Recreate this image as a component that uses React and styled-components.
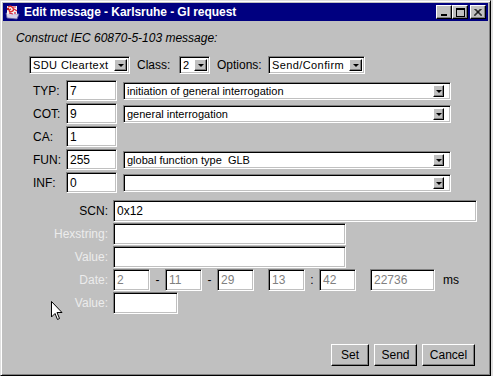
import React from "react";
import styled, { createGlobalStyle } from "styled-components";

const GlobalStyle = createGlobalStyle`
  html, body {
    margin: 0;
    padding: 0;
    background: #e0e0e0;
  }
  body {
    font-family: "Liberation Sans", Arial, sans-serif;
    font-size: 12px;
    color: #000;
  }
`;

// Window frame (raised 2px border)
const Window = styled.div`
  position: relative;
  width: 491px;
  height: 376px;
  box-sizing: border-box;
  background: #c0c0c0;
  border-style: solid;
  border-width: 1px;
  border-color: #dfdfdf #000 #000 #dfdfdf;
  box-shadow: inset 1px 1px #fff, inset -1px -1px #808080;
  padding: 2px;
  display: flex;
  flex-direction: column;
  overflow: hidden;
`;

const TitleBar = styled.div`
  height: 18px;
  background: #000080;
  display: flex;
  align-items: center;
  padding: 0 2px 0 1px;
  color: #fff;
  font-weight: bold;
  font-size: 12px;
`;

const TitleText = styled.span`
  flex: 1;
  margin-left: 4px;
  letter-spacing: -0.05px;
  white-space: nowrap;
`;

const TitleButtons = styled.div`
  display: flex;
  align-items: center;
`;

const CaptionButton = styled.div`
  width: 16px;
  height: 14px;
  box-sizing: border-box;
  background: #c0c0c0;
  border-style: solid;
  border-width: 1px;
  border-color: #fff #000 #000 #fff;
  box-shadow: inset -1px -1px #808080;
  display: flex;
  align-items: center;
  justify-content: center;
  margin-left: ${(p) => (p.gap ? "2px" : "0")};
`;

const Body = styled.div`
  flex: 1;
  display: flex;
  flex-direction: column;
`;

const Heading = styled.div`
  margin: 10px 0 0 13px;
  line-height: 14px;
  font-style: italic;
`;

const Toolbar = styled.div`
  margin: 11px 0 0 26px;
  display: grid;
  grid-template-columns: 101px 49px 31px 58px 97px;
  align-items: center;
  height: 18px;
`;

const ToolLabel = styled.span`
  padding-left: 7px;
  white-space: nowrap;
`;

const Sunken = styled.div`
  box-sizing: border-box;
  background: #fff;
  border-style: solid;
  border-width: 1px;
  border-color: #808080 #fff #fff #808080;
  box-shadow: inset 1px 1px #000, inset -1px -1px #c0c0c0;
`;

const ComboBox = styled(Sunken)`
  width: ${(p) => p.width}px;
  height: 18px;
  display: flex;
  align-items: center;
  padding: 0 ${(p) => (p.wide ? 6 : 2)}px 0 3px;
  font-size: 11px;
  letter-spacing: ${(p) => (p.wide ? 0 : 0.4)}px;
`;

const ComboText = styled.span`
  flex: 1;
  white-space: pre;
  overflow: hidden;
`;

const ArrowButton = styled.div`
  width: ${(p) => (p.wide ? 11 : 13)}px;
  height: 12px;
  box-sizing: border-box;
  background: #c0c0c0;
  border-style: solid;
  border-width: 1px;
  border-color: #fff #000 #000 #fff;
  box-shadow: inset -1px -1px #808080;
  display: flex;
  align-items: center;
  justify-content: center;
`;

const Arrow = styled.span`
  width: 0;
  height: 0;
  border-left: 3px solid transparent;
  border-right: 3px solid transparent;
  border-top: 3px solid #000;
  margin-top: 1px;
`;

const FieldGrid = styled.div`
  margin: 6px 0 0 30px;
  display: grid;
  grid-template-columns: 33px 51px 328px;
  column-gap: 0;
  grid-auto-rows: 21px;
  row-gap: 2px;
  align-items: center;
`;

const RowLabel = styled.span`
  color: ${(p) => (p.disabled ? "#ececec" : "#000")};
  white-space: nowrap;
`;

const TextField = styled(Sunken)`
  width: ${(p) => p.width}px;
  height: ${(p) => p.h || 21}px;
  padding: 0 3px;
  display: flex;
  align-items: center;
  color: ${(p) => (p.disabled ? "#808080" : "#000")};
  white-space: nowrap;
`;

const ComboCell = styled.div`
  padding-left: 6px;
`;

const LowerGrid = styled.div`
  margin-top: 7px;
  display: grid;
  grid-template-columns: 105px auto;
  column-gap: 5px;
  grid-auto-rows: 22px;
  row-gap: 1px;
  align-items: center;
  justify-items: start;

  & > ${RowLabel} {
    justify-self: end;
  }
`;

const DateRow = styled.div`
  display: flex;
  align-items: center;
`;

const Sep = styled.span`
  width: ${(p) => p.w}px;
  text-align: center;
`;

const Unit = styled.span`
  margin-left: 8px;
`;

const ButtonRow = styled.div`
  margin: 30px 13px 0 0;
  display: flex;
  justify-content: flex-end;
  gap: 5px;
`;

const PushButton = styled.button`
  width: ${(p) => p.width}px;
  height: 22px;
  box-sizing: border-box;
  background: #c0c0c0;
  border-style: solid;
  border-width: 1px;
  border-color: #fff #000 #000 #fff;
  box-shadow: inset -1px -1px #808080;
  font-family: "Liberation Sans", Arial, sans-serif;
  font-size: 12px;
  color: #000;
  padding: 0;
`;

const Cursor = styled.svg`
  position: absolute;
  left: 50px;
  top: 300px;
`;

const Combo = ({ width, value, wide }) => (
  <ComboBox width={width} wide={wide}>
    <ComboText>{value}</ComboText>
    <ArrowButton wide={wide}>
      <Arrow />
    </ArrowButton>
  </ComboBox>
);

const AppIcon = () => (
  <svg width="16" height="16" viewBox="0 0 16 16">
    <path d="M2 9 L3 14 L13 15 L15 10 Z" fill="#d8d0e8" stroke="#6060a0" strokeWidth="0.8" />
    <rect x="3" y="2" width="10" height="8" fill="#f4f4f4" />
    <path d="M4 3 Q7 1 9 4 Q11 7 6 8 Q4 6 7 5" fill="none" stroke="#e03030" strokeWidth="1.4" />
    <path d="M9 3 L12 3 M10 5 L13 7 M5 9 L9 10" stroke="#d02040" strokeWidth="1.2" />
    <circle cx="4" cy="5" r="1.2" fill="#c01818" />
    <circle cx="11" cy="9" r="1" fill="#e04060" />
  </svg>
);

const upperRows = [
  { label: "TYP:", value: "7", combo: "initiation of general interrogation" },
  { label: "COT:", value: "9", combo: "general interrogation" },
  { label: "CA:", value: "1", combo: null },
  { label: "FUN:", value: "255", combo: "global function type  GLB" },
  { label: "INF:", value: "0", combo: "" },
];

export default function App() {
  return (
    <>
      <GlobalStyle />
      <Window>
        <TitleBar>
          <AppIcon />
          <TitleText>Edit message - Karlsruhe - GI request</TitleText>
          <TitleButtons>
            <CaptionButton>
              <svg width="8" height="8" viewBox="0 0 8 8">
                <rect x="1" y="6" width="6" height="2" fill="#000" />
              </svg>
            </CaptionButton>
            <CaptionButton>
              <svg width="9" height="9" viewBox="0 0 9 9">
                <rect x="0.5" y="0.5" width="8" height="8" fill="none" stroke="#000" />
                <rect x="0" y="0" width="9" height="2" fill="#000" />
              </svg>
            </CaptionButton>
            <CaptionButton gap>
              <svg width="8" height="7" viewBox="0 0 8 7">
                <path d="M0.5 0 L7.5 7 M1.5 0 L8 6.5 M7.5 0 L0.5 7 M6.5 0 L0 6.5" stroke="#000" strokeWidth="1" />
              </svg>
            </CaptionButton>
          </TitleButtons>
        </TitleBar>

        <Body>
          <Heading>Construct IEC 60870-5-103 message:</Heading>

          <Toolbar>
            <Combo width={101} value="SDU Cleartext" />
            <ToolLabel>Class:</ToolLabel>
            <Combo width={31} value="2" />
            <ToolLabel>Options:</ToolLabel>
            <Combo width={97} value="Send/Confirm" />
          </Toolbar>

          <FieldGrid>
            {upperRows.map((row) => (
              <React.Fragment key={row.label}>
                <RowLabel>{row.label}</RowLabel>
                <TextField width={51}>{row.value}</TextField>
                <ComboCell>
                  {row.combo !== null && <Combo width={328} value={row.combo} wide />}
                </ComboCell>
              </React.Fragment>
            ))}
          </FieldGrid>

          <LowerGrid>
            <RowLabel>SCN:</RowLabel>
            <TextField width={364} h={22}>0x12</TextField>
            <RowLabel disabled>Hexstring:</RowLabel>
            <TextField width={233} h={22} disabled />
            <RowLabel disabled>Value:</RowLabel>
            <TextField width={233} h={22} disabled />
            <RowLabel disabled>Date:</RowLabel>
            <DateRow>
              <TextField width={37} h={22} disabled>2</TextField>
              <Sep w={15}>-</Sep>
              <TextField width={37} h={22} disabled>11</TextField>
              <Sep w={15}>-</Sep>
              <TextField width={37} h={22} disabled>29</TextField>
              <Sep w={14} />
              <TextField width={37} h={22} disabled>13</TextField>
              <Sep w={14}>:</Sep>
              <TextField width={37} h={22} disabled>42</TextField>
              <Sep w={14} />
              <TextField width={65} h={22} disabled>22736</TextField>
              <Unit>ms</Unit>
            </DateRow>
            <RowLabel disabled>Value:</RowLabel>
            <TextField width={65} h={22} />
          </LowerGrid>

          <ButtonRow>
            <PushButton width={38}>Set</PushButton>
            <PushButton width={43}>Send</PushButton>
            <PushButton width={53}>Cancel</PushButton>
          </ButtonRow>
        </Body>

        <Cursor width="12" height="20" viewBox="0 0 12 20">
          <path
            d="M0.5 0.5 L0.5 16 L4 12.5 L6.5 18.5 L8.5 17.5 L6 11.5 L11 11.5 Z"
            fill="#fff"
            stroke="#000"
            strokeWidth="1"
          />
        </Cursor>
      </Window>
    </>
  );
}
